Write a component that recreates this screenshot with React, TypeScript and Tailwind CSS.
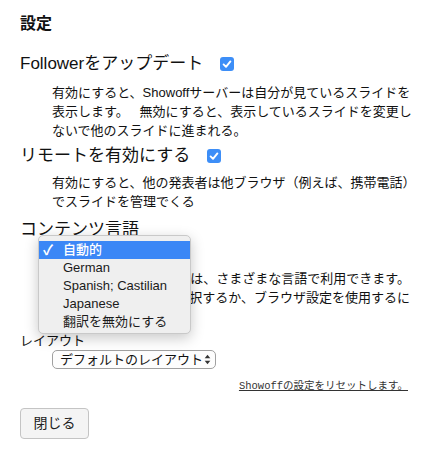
import React from "react";

const SANS = '"Liberation Sans", "Noto Sans CJK JP", sans-serif';
const MONO = '"Liberation Mono", "Noto Sans CJK JP", monospace';

function Check() {
  return (
    <span className="inline-flex h-[14px] w-[14px] items-center justify-center rounded-[3px] bg-[#3d8ef7]">
      <svg width="14" height="14" viewBox="0 0 14 14">
        <path d="M3.6 7.4 L6 9.8 L10.4 4.4" fill="none" stroke="#fff" strokeWidth="1.9" strokeLinecap="round" strokeLinejoin="round" />
      </svg>
    </span>
  );
}

function UpDown() {
  return (
    <svg width="7" height="11" viewBox="0 0 7 11">
      <path d="M3.5 0.8 L6.3 4.2 L0.7 4.2 Z" fill="#333" />
      <path d="M3.5 10.2 L6.3 6.8 L0.7 6.8 Z" fill="#333" />
    </svg>
  );
}

export default function App() {
  return (
    <div className="min-h-[450px] w-[427px] bg-white text-[#111]" style={{ fontFamily: SANS }}>
      <div className="flex flex-col pl-[20px] pt-[14px]">
        <div className="h-[20px] text-[16px] font-bold leading-[20px]">設定</div>

        <div className="mt-[18px] flex h-[24px] items-center text-[17px] leading-[24px]">
          <span>Followerをアップデート</span>
          <span className="ml-[17px] flex"><Check /></span>
        </div>
        <div className="ml-[32px] mt-[7px] whitespace-nowrap text-[13px] leading-[19px]">
          有効にすると、Showoffサーバーは自分が見ているスライドを
          <br />
          表示します。{"\u00a0\u00a0 "}無効にすると、表示しているスライドを変更し
          <br />
          ないで他のスライドに進まれる。
        </div>

        <div className="mt-[4px] flex h-[24px] items-center text-[17px] leading-[24px]">
          <span>リモートを有効にする</span>
          <span className="ml-[17px] flex"><Check /></span>
        </div>
        <div className="ml-[32px] mt-[5px] whitespace-nowrap text-[13px] leading-[19px]">
          有効にすると、他の発表者は他ブラウザ（例えば、携帯電話）
          <br />
          でスライドを管理でくる
        </div>

        <div className="relative flex flex-col">
          <div className="mt-[7px] h-[24px] text-[17px] leading-[24px]">コンテンツ言語</div>
          <div className="ml-[32px] mt-[1px] flex h-[18px] w-[100px] items-center justify-between rounded-[5px] border border-[#a8a8a8] px-[8px] text-[13px]">
            <span>自動的</span>
            <UpDown />
          </div>
          <div className="ml-[32px] mt-[8px] w-[358px] text-right whitespace-nowrap text-[13px] leading-[19px]">
            <div>Showoffのコンテンツは、さまざまな言語で利用できます。</div>
            <div>言語を選択するか、ブラウザ設定を使用するに</div>
            <div className="text-left">は「自動的」を選択。</div>
          </div>

          <div className="absolute left-[18px] top-[24px] w-[153px] rounded-[5px] border border-[#c9c9c9] bg-[#efefef] pb-[2px] pt-[5px] text-[13px] leading-[18px] text-[#1a1a1a] shadow-[0_4px_14px_rgba(0,0,0,0.22)]">
            <div className="flex h-[18px] items-center bg-[#3b87f6] text-white">
              <span className="w-[24px] pl-[4px] text-[14px] font-bold">✓</span>
              <span className="font-medium">自動的</span>
            </div>
            <div className="h-[18px] pl-[24px]">German</div>
            <div className="h-[18px] pl-[24px]">Spanish; Castilian</div>
            <div className="h-[18px] pl-[24px]">Japanese</div>
            <div className="h-[18px] pl-[24px]">翻訳を無効にする</div>
          </div>
        </div>

        <div className="mt-[5px] h-[19px] text-[13px] leading-[19px]">レイアウト</div>
        <div className="ml-[32px] mt-[0px] flex h-[19px] w-[164px] items-center justify-between rounded-[5px] border border-[#a0a0a0] bg-[#fdfdfd] pl-[7px] pr-[4px] text-[13px] leading-[17px]">
          <span>デフォルトのレイアウト</span>
          <UpDown />
        </div>

        <div className="mt-[10px] flex justify-end pr-[19px]">
          <span className="text-[10.5px] leading-[14px] text-[#333] underline" style={{ fontFamily: MONO }}>
            Showoffの設定をリセットします。
          </span>
        </div>

        <div className="mt-[15px]">
          <div className="flex h-[31px] w-[69px] items-center justify-center rounded-[4px] border border-[#c4c4c4] bg-[#f4f4f4] text-[14px] text-[#222]">
            閉じる
          </div>
        </div>
      </div>
    </div>
  );
}
